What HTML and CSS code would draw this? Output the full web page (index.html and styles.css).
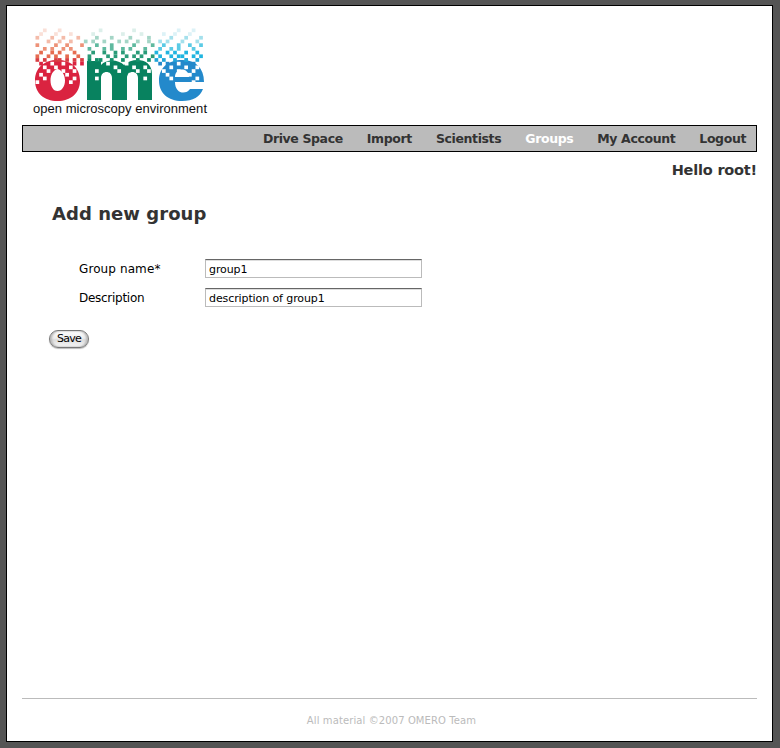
FILE: index.html
```html
<!DOCTYPE html>
<html lang="en">
<head>
<meta charset="utf-8">
<title>Add new group</title>
<link rel="stylesheet" href="styles.css">
</head>
<body>
<div class="page">
  <header>
    <svg class="logo" width="184" height="94" viewBox="28 24 184 94" role="img" aria-label="open microscopy environment">
      <path fill="#da2340" fill-rule="evenodd" d="M57.500 60C71 60 80 68 80 80.500S71 101 57.500 101S35 93 35 80.500S44 60 57.500 60ZM57.500 69C53 70 50.500 75 50.500 80.500S53 91 57.500 91S65 86 65 80.500S62 70 57.500 69Z"/>
      <path fill="#08825f" d="M87 61H101V65C106 59 118 59 124 65C133 57 152 58 152 74V100H138V78C138 70 127 70 127 78V100H112V78C112 70 101 70 101 78V100H87Z"/>
      <path fill="#2389cb" fill-rule="evenodd" d="M182 60C196 60 204 68 204 82H175C175 94 186 95 190 89H203C200 97 193 101 182 101C168 101 159 93 159 80.500S168 60 182 60ZM175 77H189C189 67 175 67 175 77Z"/>
      <g id="pixels"></g>
      <text class="logo-text" x="33" y="113" textLength="174">open microscopy environment</text>
    </svg>
  </header>
  <nav><a>Drive Space</a><a>Import</a><a>Scientists</a><a class="active">Groups</a><a>My Account</a><a>Logout</a></nav>
  <p class="hello">Hello root!</p>
  <main>
    <h1>Add new group</h1>
    <form>
      <div class="row"><label for="name">Group name*</label><input id="name" value="group1"></div>
      <div class="row"><label class="tight" for="desc">Description</label><input id="desc" value="description of group1"></div>
      <button type="button">Save</button>
    </form>
  </main>
  <footer><span>All material ©2007 OMERO Team</span></footer>
</div>
<script src="script.js"></script>
</body>
</html>
```
FILE: styles.css
```css
* { box-sizing: border-box; }
body {
  margin: 0;
  height: 748px;
  padding: 5px 7px 6px 6px;
  background: #555;
  color: #333;
  font-family: Verdana, "DejaVu Sans", sans-serif;
  overflow: hidden;
}
.page {
  height: 737px;
  padding: 0 15px;
  border: 1px solid #000;
  background: #fff;
  display: flex;
  flex-direction: column;
}
header { height: 119px; padding: 18px 0 0 6px; flex: none; }
.logo { display: block; }
.logo-text { font: 13px "Liberation Sans", Arial, sans-serif; fill: #111; }
nav {
  height: 27px;
  flex: none;
  border: 1px solid #000;
  background: #bbb;
  padding-right: 10px;
  display: flex;
  justify-content: flex-end;
  align-items: center;
  gap: 24px;
  font-size: 12.5px;
  font-weight: bold;
  letter-spacing: -.38px;
  white-space: nowrap;
}
.active { color: #fff; }
.hello { margin: 9px 0 0; text-align: right; font-size: 14.5px; line-height: 18px; font-weight: bold; letter-spacing: -.2px; }
main { padding: 23px 0 0 27px; flex: 1; }
h1 { margin: 0 0 0 3px; font-size: 18px; line-height: 24px; letter-spacing: .05px; }
form { padding-top: 33px; }
.row { display: flex; height: 19px; align-items: center; margin: 0 0 10px 30px; color: #000; }
label { width: 126px; font-size: 12px; letter-spacing: .1px; }
.tight { letter-spacing: -.28px; }
input {
  width: 217px;
  height: 19px;
  padding: 2px 3px 0;
  border: 1px solid #bbb;
  border-top-color: #666;
  background: #fff;
  box-shadow: inset 0 1px #ddd;
  color: #000;
  font: 11px "DejaVu Sans", sans-serif;
  letter-spacing: -.1px;
}
button {
  display: block;
  width: 40px;
  height: 18px;
  margin-top: 23px;
  padding: 0;
  border: 1px solid #777;
  border-radius: 9px;
  background: linear-gradient(#fff, #eee 45%, #ddd 55%, #f8f8f8);
  box-shadow: inset 2px 0 2px #bbb, inset -2px 0 2px #bbb, 0 1px 1px #bbb;
  color: #000;
  font: 11px/16px "DejaVu Sans", sans-serif;
  letter-spacing: -.7px;
}
footer {
  height: 43px;
  flex: none;
  border-top: 1px solid #bbb;
  padding: 15px 0 0 4px;
  text-align: center;
  font-size: 10px;
  line-height: 13px;
  letter-spacing: .1px;
  color: #bbb;
}
```
FILE: script.js
```js
// Each row of the logo's grid: [row colour step, coloured columns, white columns].
const rows = [
  [0, [2, 6, 17, 26, 38, 42], []],
  [0, [1, 5, 9, 15, 23, 28, 34, 37, 41], []],
  [1, [0, 4, 7, 11, 16, 20, 25, 30, 36, 40, 44], []],
  [1, [3, 6, 9, 13, 15, 18, 22, 24, 27, 30, 33, 35, 39, 43], []],
  [2, [0, 5, 8, 12, 16, 20, 26, 31, 34, 38, 41, 44], []],
  [2, [2, 4, 7, 9, 14, 18, 20, 23, 25, 29, 33, 36, 38, 42], []],
  [3, [1, 4, 6, 10, 15, 18, 21, 23, 27, 29, 32, 35, 37, 40, 43], []],
  [3, [0, 3, 5, 8, 11, 14, 19, 21, 24, 26, 28, 31, 33, 36, 38, 39, 42, 44], []],
  [4, [0, 2, 5, 6, 8, 10, 12, 14, 16, 17, 20, 23, 27, 30, 32, 34, 37, 40, 43], []],
  [5, [1, 3, 10, 12, 33, 35, 42], [4, 7, 19, 24, 38]],
  [5, [], [2, 5, 9, 21, 26, 29, 36, 40, 43]],
  [5, [], [3, 7, 10, 16, 22, 27, 30, 34, 38, 42]],
  [5, [], [1, 8, 19, 25, 35, 41]],
  [5, [], [2, 10, 16, 29, 36, 43]],
  [5, [], [0, 9, 42]]
];
const ramps = [
  ['#fae0d8', '#f4bba9', '#ed9278', '#e66c50', '#d83e43', '#da2340'],
  ['#dcefea', '#a4d5c6', '#5fb99f', '#2a9b78', '#12906a', '#08825f'],
  ['#dcf2f7', '#a4e0ec', '#5bcbe5', '#20b5e0', '#20a5d8', '#2389cb']
];
let dots = '';
const square = (k, r, fill) => {
  dots += `<rect x="${35.5 + k * 3.72}" y="${28.5 + r * 3.7}" width="3.7" height="3.7" fill="${fill}"/>`;
};
rows.forEach(([step, coloured, white], r) => {
  coloured.forEach(k => square(k, r, ramps[k < 13 ? 0 : k < 32 ? 1 : 2][step]));
  white.forEach(k => square(k, r, '#fff'));
});
document.getElementById('pixels').innerHTML = dots;
```
